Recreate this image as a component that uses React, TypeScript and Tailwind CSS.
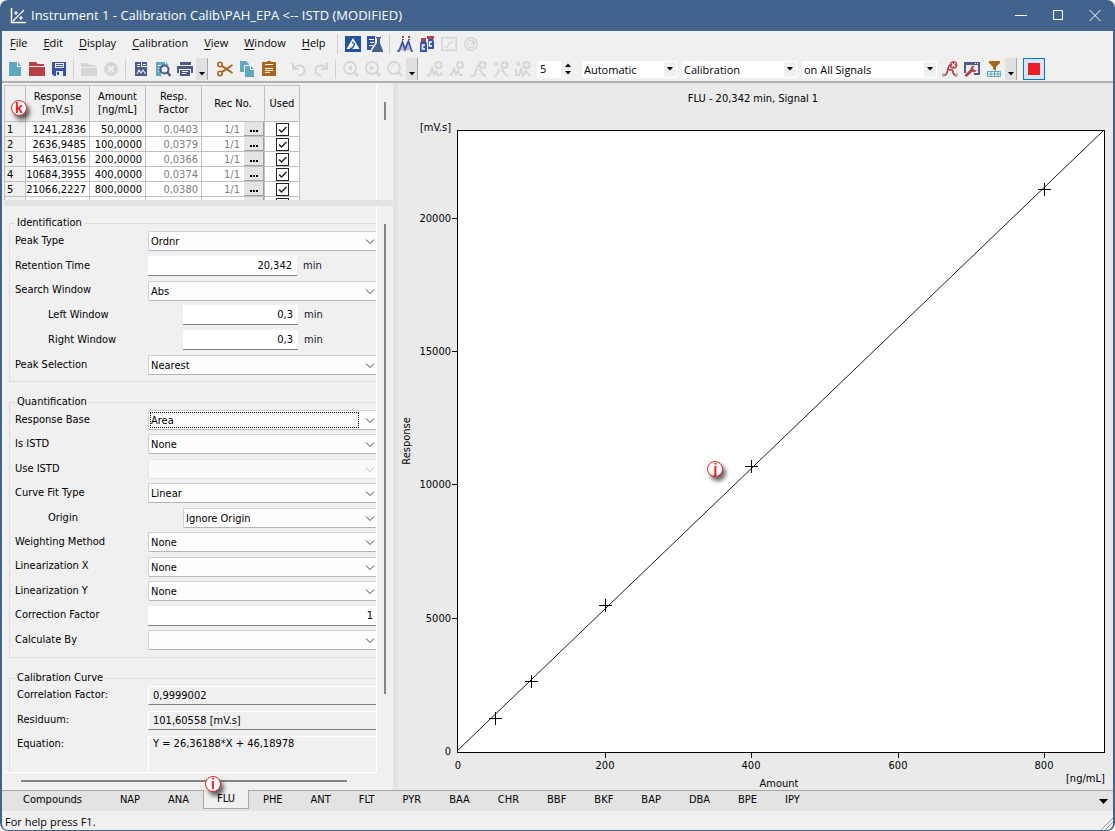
import React from "react";

/* ---------- icons ---------- */

type IconProps = { children: React.ReactNode };

function Icon({ children }: IconProps) {
  return (
    <svg className="h-4 w-4 shrink-0" viewBox="0 0 16 16" fill="none" aria-hidden="true">
      {children}
    </svg>
  );
}

const GREY = "#d6d6d6";
const TEAL = "#5fa9c0";
const NAVY = "#4a5a8c";
const RED = "#b93f46";
const GOLD = "#a8681c";

const icons = {
  newFile: (
    <Icon>
      <path d="M2 1h8v5h4v9H2z" fill={TEAL} />
      <path d="M11 1l3 4h-3z" fill={TEAL} />
    </Icon>
  ),
  open: (
    <Icon>
      <path d="M0 1h7l2 2h6v2H0z" fill={RED} />
      <path d="M0 6h16v9H0z" fill={RED} />
    </Icon>
  ),
  save: (
    <Icon>
      <path d="M1 1h14v14H3l-2-2z" fill="#3550ad" />
      <path d="M4 2h9v5H4z" fill="#f0f0f0" />
      <path d="M5 3.500h7M5 5.500h7" stroke="#3550ad" />
      <path d="M5 10h7v5H5z" fill="#f0f0f0" />
      <path d="M6 11h2v3H6z" fill="#3550ad" />
    </Icon>
  ),
  openGrey: (
    <Icon>
      <path d="M0 2h7l2 2h6v2H0z" fill={GREY} />
      <path d="M0 7h16v8H0z" fill={GREY} />
    </Icon>
  ),
  closeGrey: (
    <Icon>
      <circle cx="8" cy="8" r="7" fill={GREY} />
      <path d="M5 5l6 6M11 5l-6 6" stroke="#f0f0f0" strokeWidth="2" />
    </Icon>
  ),
  report: (
    <Icon>
      <path d="M2 1h6v5h6v9H2z" fill={NAVY} />
      <path d="M9 1h5v4H9z" fill={NAVY} />
      <path d="M4 3.500h3M10 3.500h3M4 5.500h3" stroke="#f0f0f0" />
      <path d="M4 13l2-4 2 3 2-3 2.500 4" stroke="#f0f0f0" strokeWidth="1.100" />
    </Icon>
  ),
  preview: (
    <Icon>
      <path d="M1 1h9v4H6v10H1zM11 1l3 3h-3z" fill={TEAL} />
      <path d="M3 4.500h3M3 7.500h1M3 10.500h1" stroke="#f0f0f0" />
      <circle cx="9.500" cy="8.500" r="4" fill="#f0f0f0" stroke={NAVY} strokeWidth="2" />
      <path d="M12 11l3.500 4" stroke={NAVY} strokeWidth="2.400" />
    </Icon>
  ),
  print: (
    <Icon>
      <path d="M3 1h11v3H3z" fill={NAVY} />
      <path d="M0 5h16v7h-2V8H2v4H0z" fill={NAVY} />
      <path d="M3 9h10v6H3z" fill={NAVY} />
      <path d="M5 10.500h6M5 12.500h4" stroke="#f0f0f0" />
    </Icon>
  ),
  cut: (
    <Icon>
      <circle cx="3" cy="3.500" r="2.200" stroke={GOLD} strokeWidth="1.600" />
      <circle cx="3" cy="12.500" r="2.200" stroke={GOLD} strokeWidth="1.600" />
      <path d="M4.800 4.800L15.500 12M4.800 11.200L15.500 4" stroke={GOLD} strokeWidth="2" />
    </Icon>
  ),
  copy: (
    <Icon>
      <path d="M1 0h6l3 3v8H1z" fill={TEAL} />
      <path d="M5 4h6l5 5v7H5z" fill="#f0f0f0" />
      <path d="M6 5h5v4h4v7H6zM12 5l3 3h-3z" fill={TEAL} />
    </Icon>
  ),
  paste: (
    <Icon>
      <path d="M1 1h14v14H1z" fill={GOLD} />
      <path d="M4 1h8v3H4z" fill="#f0f0f0" />
      <path d="M6 0h4v1h2v2H4V1h2z" fill={GOLD} />
      <path d="M4 7.500h8M4 9.500h8M4 11.500h5" stroke="#f0f0f0" />
    </Icon>
  ),
  undo: (
    <Icon>
      <path d="M2 2v6h6" stroke={GREY} strokeWidth="2" />
      <path d="M3 7c3-4 10-3 10.500 2 0 3-2 5-5.500 5.500" stroke={GREY} strokeWidth="2.200" />
    </Icon>
  ),
  redo: (
    <Icon>
      <path d="M14 2v6H8" stroke={GREY} strokeWidth="2" />
      <path d="M13 7C10 3 3 4 2.500 9c0 3 2 5 5.500 5.500" stroke={GREY} strokeWidth="2.200" />
    </Icon>
  ),
  zoomPrev: (
    <Icon>
      <circle cx="7" cy="7" r="6" stroke={GREY} strokeWidth="1.800" />
      <path d="M9 4v6L4.500 7z" fill={GREY} />
      <path d="M11 11l4 4" stroke={GREY} strokeWidth="2.500" />
    </Icon>
  ),
  zoomNext: (
    <Icon>
      <circle cx="7" cy="7" r="6" stroke={GREY} strokeWidth="1.800" />
      <path d="M5 4v6l4.500-3z" fill={GREY} />
      <path d="M11 11l4 4" stroke={GREY} strokeWidth="2.500" />
    </Icon>
  ),
  zoomOut: (
    <Icon>
      <circle cx="7" cy="7" r="6" stroke={GREY} strokeWidth="1.800" />
      <path d="M4 6c.5-1.500 1.500-2 3-2" stroke={GREY} />
      <path d="M11 11l4 4" stroke={GREY} strokeWidth="2.500" />
    </Icon>
  ),
  peakAddA: (
    <Icon>
      <path d="M0 14.500h2.500L5 7.500l2 6.500 2-4 2 4.500h2l2-3" stroke={GREY} strokeWidth="2" />
      <circle cx="11.500" cy="4" r="4" fill={GREY} />
      <path d="M9 4h5M11.500 1.500v5" stroke="#f0f0f0" strokeWidth="1.300" />
    </Icon>
  ),
  peakAddB: (
    <Icon>
      <path d="M0 13.500h2.500L5 8l2 5.500L9 10l2 4h3" stroke={GREY} strokeWidth="2" />
      <circle cx="11" cy="4" r="4" fill={GREY} />
      <path d="M8.500 4h5M11 1.500v5" stroke="#f0f0f0" strokeWidth="1.300" />
    </Icon>
  ),
  peakAddC: (
    <Icon>
      <path d="M0 15c4 0 4-1 5-5s1-6 4-6M8 8c3 2 2 6 7 7" stroke={GREY} strokeWidth="2" />
      <circle cx="11.500" cy="4" r="4" fill={GREY} />
      <path d="M9 4h5M11.500 1.500v5" stroke="#f0f0f0" strokeWidth="1.300" />
    </Icon>
  ),
  groupAdd: (
    <Icon>
      <path d="M1 15c3 0 4-2 5-7M8 8c3 1 2 5 7 7" stroke={GREY} strokeWidth="2" />
      <path d="M4.500 1.500C1-.5 0 5 4.500 4V3H3" stroke={GREY} strokeWidth="1.300" />
      <circle cx="11.500" cy="4" r="4" fill={GREY} />
      <path d="M9 4h5M11.500 1.500v5" stroke="#f0f0f0" strokeWidth="1.300" />
    </Icon>
  ),
  groupAddAll: (
    <Icon>
      <path d="M1 8v6h3l2-6 2 6.500 3-5 4 5.500" stroke={GREY} strokeWidth="2" />
      <path d="M4.500 1.500C1-.5 0 5 4.500 4V3H3" stroke={GREY} strokeWidth="1.300" />
      <circle cx="11.500" cy="4" r="4" fill={GREY} />
      <path d="M9 4h5M11.500 1.500v5" stroke="#f0f0f0" strokeWidth="1.300" />
    </Icon>
  ),
  removeFit: (
    <Icon>
      <path d="M0 14c5 1 5-2 6-6s2-4 4-4M7 9c2-1 4 0 4 2s1 3 4 4" stroke={RED} strokeWidth="1.800" />
      <path d="M1 12v3h2M13 15h2v-3" stroke="#b4b4b4" strokeWidth="1.500" />
      <circle cx="11.500" cy="4" r="3.800" fill={RED} />
      <path d="M9.700 2.200l3.600 3.600M13.300 2.200L9.700 5.800" stroke="#fff" strokeWidth="1.200" />
    </Icon>
  ),
  options: (
    <Icon>
      <path d="M0 1h16v13h-6v-2h4V4H2v8H0z" fill={NAVY} />
      <path d="M11 2.500h1M13 2.500h1" stroke="#fff" />
      <path d="M1.500 15L8 9" stroke={RED} strokeWidth="3" />
      <path d="M10.500 4.500A3.300 3.300 0 1 0 13 9l-2.500.2L9 7.500z" fill={RED} />
    </Icon>
  ),
  filter: (
    <Icon>
      <path d="M3 0h11v2l-4 4v4L7 8V6L3 2z" fill={GOLD} />
      <path d="M1.500 10.500h13v5h-13zM1.500 13h13M5 10.500v5M8.500 10.500v5M12 10.500v5" stroke={TEAL} />
    </Icon>
  ),
  instrument: (
    <Icon>
      <path d="M0 0h16v16H0z" fill="#1f559b" />
      <path d="M8 2l6.500 11h-13z" fill="#fff" />
      <path d="M5 12.500c2 0 4-2 4.500-4.500L7 6" stroke="#1f559b" strokeWidth="1.300" />
    </Icon>
  ),
  method: (
    <Icon>
      <path d="M0 0h10v14H0z" fill="#3550ad" />
      <path d="M2 3.500h5M3 6.500h4M2 9.500h4" stroke="#fff" />
      <path d="M8 0h7v3h-1v4l2 4v5H4v-3l4-6V3z" fill="#f0f0f0" />
      <path d="M9 1h5v1.200h-1V7l3 7.500V16H5v-1.500L10 7V2.200H9z" fill="#41638c" />
    </Icon>
  ),
  chromatogram: (
    <Icon>
      <path d="M2 15l3-9 2 7 4-8 2 9z" fill="#bbb" />
      <path d="M0 15h2L5.500 6 8 13.500 11.500 5l3 10H16" stroke="#3550ad" strokeWidth="1.700" />
      <path d="M5 0h2v2H5zM5 3h2v1H5zM11 0h2v2h-2zM11 3h2v1h-2z" fill={RED} />
    </Icon>
  ),
  calibration: (
    <Icon>
      <path d="M8 0h7v3H8zM2 2h5v3H2z" fill={RED} />
      <path d="M9 3h5l1 3v7H9z" fill="#3550ad" />
      <path d="M2 5h5l1 3v8H1V8z" fill="#3550ad" />
      <path d="M13 6h-2.500v4H13M6 9H3.500v4H6" stroke="#fff" strokeWidth="1.500" />
    </Icon>
  ),
  chartGrey: (
    <Icon>
      <path d="M.8 1.800h14.400v12.400H.8z" stroke={GREY} strokeWidth="1.600" />
      <path d="M3 11h3l2-4h2l3-2" stroke={GREY} strokeWidth="1.300" />
    </Icon>
  ),
  gaugeGrey: (
    <Icon>
      <circle cx="8" cy="8" r="6.300" stroke={GREY} strokeWidth="1.600" />
      <circle cx="8" cy="8" r="3.500" stroke={GREY} strokeWidth="1.300" />
      <path d="M8 9l4-4" stroke={GREY} strokeWidth="1.800" />
    </Icon>
  ),
};

/* ---------- toolbar parts ---------- */

function ToolButton({ label, children, disabled }: { label: string; children: React.ReactNode; disabled?: boolean }) {
  return (
    <button type="button" aria-label={label} disabled={disabled} className="flex h-[22px] w-[22px] shrink-0 items-center justify-center">
      {children}
    </button>
  );
}

function Separator() {
  return <div className="mx-[3px] h-5 w-0.5 shrink-0 border-l border-[#cfcfcf]" />;
}

function MoreButton({ label }: { label: string }) {
  return (
    <button type="button" aria-label={label} className="flex h-[22px] w-3 shrink-0 items-end justify-center border-r border-[#a8a8a8] bg-[#e0e0e0] pb-1">
      <svg className="h-1 w-2" viewBox="0 0 8 4" aria-hidden="true">
        <path d="M1 0h6L4 3.500z" fill="#000" />
      </svg>
    </button>
  );
}

function ToolSelect({ label, value, className }: { label: string; value: string; className: string }) {
  return (
    <div className={"relative h-[17px] shrink-0 bg-white " + className}>
      <select aria-label={label} className="block h-full w-full appearance-none bg-transparent pt-px pl-0.5 text-[11px] outline-none">
        <option>{value}</option>
      </select>
      <div className="pointer-events-none absolute inset-y-px right-px flex w-3 items-center justify-center bg-[#f0f0f0]">
        <svg className="h-1 w-2" viewBox="0 0 8 4" aria-hidden="true">
          <path d="M1 0h6L4 3.500z" fill="#000" />
        </svg>
      </div>
    </div>
  );
}

/* ---------- callout badge ---------- */

function Callout({ letter, className }: { letter: string; className: string }) {
  return (
    <span
      className={
        "absolute z-10 flex h-4 w-4 items-center justify-center rounded-full border border-[#f02020] bg-white font-['Liberation_Sans',sans-serif] text-[14px] leading-none font-bold text-[#f01818] shadow-[3px_4px_4px_rgba(0,0,0,0.6)] " +
        className
      }
    >
      {letter}
    </span>
  );
}

/* ---------- calibration table ---------- */

const rows = [
  ["1", "1241,2836", "50,0000", "0,0403"],
  ["2", "2636,9485", "100,0000", "0,0379"],
  ["3", "5463,0156", "200,0000", "0,0366"],
  ["4", "10684,3955", "400,0000", "0,0374"],
  ["5", "21066,2227", "800,0000", "0,0380"],
];

function RecCell({ row, value }: { row: string; value: string }) {
  return (
    <>
      <td className="border border-[#c0c0c0] bg-white p-0">
        <div className="flex h-3.5 items-center justify-end gap-1">
          <span className="pt-px text-[#808080]">{value}</span>
          <button type="button" aria-label={"Recovery for level " + row} className="flex h-3.5 w-5 items-end justify-center gap-px border-r border-b border-[#a0a0a0] bg-[#e4e4e4] pb-[3px]">
            <span className="h-0.5 w-0.5 bg-black" />
            <span className="h-0.5 w-0.5 bg-black" />
            <span className="h-0.5 w-0.5 bg-black" />
          </button>
        </div>
      </td>
      <td className="border border-[#c0c0c0] bg-white p-0">
        <div className="relative mx-auto h-[13px] w-[13px]">
          <input type="checkbox" defaultChecked aria-label={"Level " + row + " used"} className="block h-[13px] w-[13px] appearance-none border border-[#222] bg-white" />
          <svg className="pointer-events-none absolute inset-0 h-[13px] w-[13px]" viewBox="0 0 13 13" fill="none" aria-hidden="true">
            <path d="M3 6.500l2.500 2.500 5-5" stroke="#222" strokeWidth="1.500" />
          </svg>
        </div>
      </td>
    </>
  );
}

function LevelTable() {
  const head = "border border-[#c0c0c0] bg-[#f0f0f0] p-0 pb-px font-normal leading-[13px]";
  const cell = "border border-[#c0c0c0] bg-white p-0 pt-px pr-[3px] text-right";
  return (
    <table className="w-[295px] table-fixed border-collapse text-[11px] leading-[13px]">
      <colgroup>
        <col className="w-[21px]" />
        <col className="w-16" />
        <col className="w-14" />
        <col className="w-14" />
        <col className="w-[63px]" />
        <col className="w-[35px]" />
      </colgroup>
      <thead>
        <tr className="h-9">
          <th className={head} aria-label="Level" />
          <th className={head}>Response<br />[mV.s]</th>
          <th className={head}>Amount<br />[ng/mL]</th>
          <th className={head}>Resp.<br />Factor</th>
          <th className={head}>Rec No.</th>
          <th className={head}>Used</th>
        </tr>
      </thead>
      <tbody>
        {rows.map((r) => (
          <tr key={r[0]} className="h-[15px]">
            <td className="border border-[#c0c0c0] bg-[#f0f0f0] p-0 pt-px pl-0.5">{r[0]}</td>
            <td className={cell}>{r[1]}</td>
            <td className={cell}>{r[2]}</td>
            <td className={cell + " text-[#808080]"}>{r[3]}</td>
            <RecCell row={r[0]} value="1/1" />
          </tr>
        ))}
        <tr className="h-[15px]">
          <td className="border border-[#c0c0c0] bg-[#f0f0f0] p-0" />
          <td className={cell} />
          <td className={cell} />
          <td className={cell} />
          <RecCell row="6" value="" />
        </tr>
      </tbody>
    </table>
  );
}

/* ---------- form parts ---------- */

function Chevron({ dim }: { dim?: boolean }) {
  return (
    <svg className="pointer-events-none absolute top-[7px] right-px h-2 w-2.5" viewBox="0 0 10 8" fill="none" aria-hidden="true">
      <path d="M1 1.500l4 4 4-4" stroke={dim ? "#b8b8b8" : "#444"} />
    </svg>
  );
}

function Combo({ id, label, value, indent, disabled, focused }: { id: string; label: string; value: string; indent?: boolean; disabled?: boolean; focused?: boolean }) {
  return (
    <div className="flex h-5 items-center">
      <label htmlFor={id} className={indent ? "w-[168px] shrink-0 pl-[33px]" : "w-[133px] shrink-0"}>
        {label}
      </label>
      <div className="relative h-5 min-w-0 flex-1">
        <select
          id={id}
          disabled={disabled}
          className={
            "block h-5 w-full appearance-none rounded-l-[2px] border border-r-0 pt-0.5 pl-0.5 opacity-100 outline-none " +
            (disabled ? "border-[#e6e6e6] bg-[#fafafa]" : "border-[#d0d0d0] border-b-[#b4b4b4] bg-[#fdfdfd]")
          }
        >
          <option>{value}</option>
        </select>
        {focused && <div className="pointer-events-none absolute inset-y-0.5 right-[17px] left-0.5 border border-dotted border-black" />}
        <Chevron dim={disabled} />
      </div>
    </div>
  );
}

function NumberField({ id, label, value, unit, indent }: { id: string; label: string; value: string; unit?: string; indent?: boolean }) {
  return (
    <div className="flex h-5 items-center">
      <label htmlFor={id} className={indent ? "w-[168px] shrink-0 pl-[33px]" : "w-[133px] shrink-0"}>
        {label}
      </label>
      <input
        id={id}
        defaultValue={value}
        className={
          "h-5 border-b border-[#808080] bg-white text-right outline-none " +
          (unit ? (indent ? "w-[115px] pr-[5px]" : "w-[149px] pr-[5px]") : "w-0 flex-1 pr-[3px]")
        }
      />
      {unit && <span className="pl-1.5 text-[#101030]">{unit}</span>}
    </div>
  );
}

function Group({ title, className, children }: { title: string; className: string; children: React.ReactNode }) {
  return (
    <fieldset className={"min-w-0 border border-r-0 border-[#dcdcdc] pl-[5px] " + className}>
      <legend className="h-4 px-0.5 leading-4">{title}</legend>
      {children}
    </fieldset>
  );
}

function ReadOnly({ id, label, value }: { id: string; label: string; value: string }) {
  return (
    <div className="flex h-[19px] items-center">
      <label htmlFor={id} className="w-[133px] shrink-0 pl-0.5">{label}</label>
      <input id={id} readOnly value={value} className="h-[19px] w-0 flex-1 border-t border-b border-l border-t-white border-b-[#808080] border-l-white bg-transparent pl-1 outline-none" />
    </div>
  );
}

function ParameterForm() {
  return (
    <form className="flex flex-col pt-[9px] pl-[5px] text-[11px]">
      <Group title="Identification" className="pb-1.5">
        <div className="flex h-[144px] flex-col justify-between">
          <Combo id="peak-type" label="Peak Type" value="Ordnr" />
          <NumberField id="ret-time" label="Retention Time" value="20,342" unit="min" />
          <Combo id="search-window" label="Search Window" value="Abs" />
          <NumberField id="left-window" label="Left Window" value="0,3" unit="min" indent />
          <NumberField id="right-window" label="Right Window" value="0,3" unit="min" indent />
          <Combo id="peak-selection" label="Peak Selection" value="Nearest" />
        </div>
      </Group>
      <Group title="Quantification" className="mt-3 pb-[7px]">
        <div className="flex h-60 flex-col justify-between">
          <Combo id="resp-base" label="Response Base" value="Area" focused />
          <Combo id="is-istd" label="Is ISTD" value="None" />
          <Combo id="use-istd" label="Use ISTD" value="" disabled />
          <Combo id="curve-fit" label="Curve Fit Type" value="Linear" />
          <Combo id="origin" label="Origin" value="Ignore Origin" indent />
          <Combo id="weighting" label="Weighting Method" value="None" />
          <Combo id="lin-x" label="Linearization X" value="None" />
          <Combo id="lin-y" label="Linearization Y" value="None" />
          <NumberField id="corr-factor" label="Correction Factor" value="1" />
          <Combo id="calc-by" label="Calculate By" value="" />
        </div>
      </Group>
      <Group title="Calibration Curve" className="mt-3 border-b-0">
        <div className="flex flex-col gap-1.5">
          <ReadOnly id="correlation" label="Correlation Factor:" value="0,9999002" />
          <ReadOnly id="residuum" label="Residuum:" value="101,60558 [mV.s]" />
          <div className="flex">
            <label htmlFor="equation" className="w-[133px] shrink-0 pl-0.5 leading-4">Equation:</label>
            <textarea id="equation" readOnly value="Y = 26,36188*X + 46,18978" className="block h-16 w-0 flex-1 resize-none border-t border-l border-white bg-transparent pl-1 leading-[14px] outline-none" />
          </div>
        </div>
      </Group>
    </form>
  );
}

/* ---------- chart ---------- */

const plot = { left: 59, top: 47, right: 706, bottom: 669, pxPerX: 0.733, pxPerY: 0.02667 };
const levels = [
  [50, 1241.2836],
  [100, 2636.9485],
  [200, 5463.0156],
  [400, 10684.3955],
  [800, 21066.2227],
];

function CalibrationChart() {
  const px = (v: number) => Math.round(plot.left + 1 + v * plot.pxPerX);
  const py = (v: number) => Math.round(plot.bottom - 1 - v * plot.pxPerY);
  return (
    <svg className="block h-auto w-full text-[11px]" viewBox="0 0 715 706" role="img" aria-label="Calibration curve">
      <rect x={plot.left + 0.5} y={plot.top + 0.5} width={plot.right - plot.left} height={plot.bottom - plot.top} fill="#fff" stroke="#000" />
      <path d={`M${plot.left} ${plot.bottom - 1}L${plot.right} ${plot.top}`} stroke="#000" strokeWidth="0.9" fill="none" />
      <text x="355" y="19" textAnchor="middle">FLU - 20,342 min, Signal 1</text>
      <text x="22" y="48">[mV.s]</text>
      <text x="668" y="699">[ng/mL]</text>
      <text x="381" y="704" textAnchor="middle">Amount</text>
      <text transform="translate(12 358) rotate(-90)" textAnchor="middle">Response</text>
      {[0, 5000, 10000, 15000, 20000].map((v) => (
        <g key={v}>
          {v > 0 && <path d={`M${plot.left - 5} ${py(v) + 0.5}h5`} stroke="#000" />}
          <text x={plot.left - 6} y={py(v) + 4} textAnchor="end">{v}</text>
        </g>
      ))}
      {[0, 200, 400, 600, 800].map((v) => (
        <g key={v}>
          {v > 0 && <path d={`M${px(v) + 0.5} ${plot.bottom}v6`} stroke="#000" />}
          <text x={px(v)} y={plot.bottom + 17} textAnchor="middle">{v}</text>
        </g>
      ))}
      {levels.map(([x, y]) => (
        <path key={x} d={`M${px(x) - 6} ${py(y) + 0.5}h13M${px(x) + 0.5} ${py(y) - 6}v13`} stroke="#000" />
      ))}
    </svg>
  );
}

/* ---------- page ---------- */

const menus = [
  ["F", "ile"],
  ["E", "dit"],
  ["D", "isplay"],
  ["C", "alibration"],
  ["V", "iew"],
  ["W", "indow"],
  ["H", "elp"],
];

const tabs = ["NAP", "ANA", "FLU", "PHE", "ANT", "FLT", "PYR", "BAA", "CHR", "BBF", "BKF", "BAP", "DBA", "BPE", "IPY"];

export default function App() {
  return (
    <div className="flex min-h-screen flex-col overflow-hidden rounded-t-lg rounded-b-lg bg-[#41638c] px-0.5 pb-px font-['DejaVu_Sans_Condensed','DejaVu_Sans',sans-serif] text-[11px] text-black">
      <header className="flex h-[31px] items-center pl-2 text-white">
        <svg className="h-4 w-4" viewBox="0 0 16 16" fill="none" aria-hidden="true">
          <path d="M1.500 0v14.500H16" stroke="#fff" strokeWidth="1.500" />
          <path d="M3 13L14 2M4 5h4M6 3v4M9 10h4M11 8v4" stroke="#fff" strokeWidth="1.200" />
        </svg>
        <h1 className="flex-1 pl-[5px] font-['Open_Sans',sans-serif] text-[13px]">Instrument 1 - Calibration Calib\PAH_EPA &lt;-- ISTD (MODIFIED)</h1>
        <button type="button" aria-label="Minimize" className="flex h-full w-[37px] items-center justify-center">
          <svg className="h-3 w-3" viewBox="0 0 12 12"><path d="M0 5.500h12" stroke="#fff" /></svg>
        </button>
        <button type="button" aria-label="Maximize" className="flex h-full w-[37px] items-center justify-center">
          <svg className="h-3 w-3" viewBox="0 0 12 12" fill="none"><path d="M1.500.5h9v9h-9z" stroke="#fff" /></svg>
        </button>
        <button type="button" aria-label="Close" className="flex h-full w-[37px] items-center justify-center">
          <svg className="h-3 w-3" viewBox="0 0 12 12"><path d="M.5 0l11 11M11.500 0L.5 11" stroke="#fff" /></svg>
        </button>
      </header>

      <nav className="flex h-[26px] items-center bg-[#f0f0f0] pb-px font-['Open_Sans',sans-serif] text-[11px]">
        {menus.map(([k, rest]) => (
          <button key={k} type="button" className="shrink-0 px-2">
            <span className="underline underline-offset-2">{k}</span>{rest}
          </button>
        ))}
        <Separator />
        <ToolButton label="Instrument">{icons.instrument}</ToolButton>
        <ToolButton label="Method">{icons.method}</ToolButton>
        <Separator />
        <ToolButton label="Chromatogram">{icons.chromatogram}</ToolButton>
        <ToolButton label="Calibration">{icons.calibration}</ToolButton>
        <ToolButton label="Chart" disabled>{icons.chartGrey}</ToolButton>
        <ToolButton label="Gauge" disabled>{icons.gaugeGrey}</ToolButton>
      </nav>

      <div className="flex h-[26px] items-center border-b-2 border-[#b0b0b0] bg-[#f0f0f0] pl-0.5 font-['Open_Sans',sans-serif]">
        <ToolButton label="New">{icons.newFile}</ToolButton>
        <ToolButton label="Open">{icons.open}</ToolButton>
        <ToolButton label="Save">{icons.save}</ToolButton>
        <Separator />
        <ToolButton label="Open standard" disabled>{icons.openGrey}</ToolButton>
        <ToolButton label="Close standard" disabled>{icons.closeGrey}</ToolButton>
        <Separator />
        <ToolButton label="Report setup">{icons.report}</ToolButton>
        <ToolButton label="Preview">{icons.preview}</ToolButton>
        <ToolButton label="Print">{icons.print}</ToolButton>
        <MoreButton label="More file commands" />
        <div className="w-1.5 shrink-0" />
        <ToolButton label="Cut">{icons.cut}</ToolButton>
        <ToolButton label="Copy">{icons.copy}</ToolButton>
        <ToolButton label="Paste">{icons.paste}</ToolButton>
        <div className="w-2 shrink-0" />
        <ToolButton label="Undo" disabled>{icons.undo}</ToolButton>
        <ToolButton label="Redo" disabled>{icons.redo}</ToolButton>
        <Separator />
        <ToolButton label="Previous zoom" disabled>{icons.zoomPrev}</ToolButton>
        <ToolButton label="Next zoom" disabled>{icons.zoomNext}</ToolButton>
        <ToolButton label="Unzoom" disabled>{icons.zoomOut}</ToolButton>
        <MoreButton label="More zoom commands" />
        <div className="w-1.5 shrink-0" />
        <ToolButton label="Add all" disabled>{icons.peakAddA}</ToolButton>
        <ToolButton label="Add existing" disabled>{icons.peakAddB}</ToolButton>
        <ToolButton label="Add peak" disabled>{icons.peakAddC}</ToolButton>
        <ToolButton label="Add group" disabled>{icons.groupAdd}</ToolButton>
        <ToolButton label="Add all groups" disabled>{icons.groupAddAll}</ToolButton>
        <div className="ml-[3px] flex h-[17px] w-[38px] shrink-0 bg-white">
          <input aria-label="Level" defaultValue="5" className="w-6 bg-white pl-[3px] text-[11px] outline-none" />
          <div className="flex flex-1 flex-col items-center justify-around bg-[#f0f0f0]">
            <svg className="h-1 w-2" viewBox="0 0 8 4"><path d="M1 4h6L4 .5z" fill="#000" /></svg>
            <svg className="h-1 w-2" viewBox="0 0 8 4"><path d="M1 0h6L4 3.500z" fill="#000" /></svg>
          </div>
        </div>
        <ToolSelect label="Mode" value="Automatic" className="ml-[7px] w-[95px]" />
        <ToolSelect label="Calibration type" value="Calibration" className="ml-[5px] w-[115px]" />
        <ToolSelect label="Signals" value="on All Signals" className="ml-[5px] w-[135px]" />
        <div className="w-0.5 shrink-0" />
        <ToolButton label="Remove fit">{icons.removeFit}</ToolButton>
        <ToolButton label="Options">{icons.options}</ToolButton>
        <ToolButton label="Filter">{icons.filter}</ToolButton>
        <MoreButton label="More calibration commands" />
        <button type="button" aria-label="Stop" className="ml-1.5 flex h-[22px] w-[22px] shrink-0 items-center justify-center border border-[#0078d7] bg-[#d8e6f3]">
          <span className="h-3 w-3 bg-[#ed1c24]" />
        </button>
      </div>

      <main className="flex flex-1 bg-[#eaeaea]">
        <section className="flex w-[396px] shrink-0 flex-col border-r-[5px] border-[#e3e3e3] bg-[#f0f0f0] pl-0.5">
          <div className="relative flex h-[117px] pt-0.5">
            <div className="h-[115px] w-[373px] overflow-hidden border-r border-white">
              <LevelTable />
            </div>
            <div className="mt-[17px] ml-[7px] h-[18px] w-0.5 bg-[#858585]" />
            <Callout letter="k" className="top-[17px] left-[7px]" />
          </div>
          <div className="h-1.5 bg-[#e3e3e3]" />
          <div className="flex min-h-0 flex-1">
            <div className="h-[567px] w-[373px] overflow-hidden border-r border-b border-white">
              <ParameterForm />
            </div>
            <div className="mt-[18px] ml-[7px] h-[470px] w-0.5 bg-[#858585]" />
          </div>
          <div className="relative h-[17px]">
            <div className="mt-[7px] ml-[17px] h-0.5 w-[326px] bg-[#858585]" />
            <Callout letter="i" className="top-[3px] left-[201px]" />
          </div>
        </section>
        <section className="relative min-w-0 flex-1">
          <CalibrationChart />
          <Callout letter="j" className="top-[54%] left-[43%] -mt-1 ml-0.5" />
        </section>
      </main>

      <div className="flex h-[21px] items-start border-t border-[#a9a9a9] bg-[#e3e3e3] pl-px" role="tablist">
        <button type="button" role="tab" className="h-[18px] shrink-0 pr-6 pl-5">Compounds</button>
        {tabs.map((t) => (
          <button
            key={t}
            type="button"
            role="tab"
            aria-selected={t === "FLU"}
            className={
              "h-[18px] shrink-0 " +
              (t === "FLU" ? "-mt-px h-[19px] border border-t-0 border-[#a9a9a9] bg-[#f0f0f0] px-[13px]" : "px-3.5")
            }
          >
            {t}
          </button>
        ))}
        <button type="button" aria-label="More tabs" className="ml-auto flex h-full w-5 items-center justify-center">
          <svg className="h-[5px] w-[9px]" viewBox="0 0 9 5"><path d="M0 0h9L4.500 5z" fill="#000" /></svg>
        </button>
      </div>

      <footer className="flex h-[19px] items-center justify-between rounded-b-md bg-[#f0f0f0] pl-[3px] font-['Open_Sans',sans-serif]">
        <span className="pt-1">For help press F1.</span>
        <svg className="h-3 w-3 self-end" viewBox="0 0 12 12"><path d="M0 12L12 0M4 12l8-8M8 12l4-4" stroke="#999" /></svg>
      </footer>
    </div>
  );
}
